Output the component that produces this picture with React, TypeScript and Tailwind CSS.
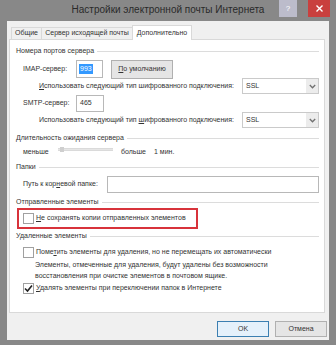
import React from "react";

const F = { fontFamily: '"Liberation Sans", Arial, sans-serif' };

function GroupHeader({ children, className = "" }: { children: React.ReactNode; className?: string }) {
  return (
    <div className={`flex items-center h-[12px] pl-[6px] pr-[5px] ${className}`}>
      <span className="whitespace-nowrap">{children}</span>
      <div className="flex-1 h-px bg-[#dcdcdc] ml-[3px]" />
    </div>
  );
}

function Select() {
  return (
    <div className="w-[77px] h-[16px] border border-[#cacaca] bg-white flex items-stretch shrink-0">
      <div className="flex-1 flex items-center pl-[3px]">SSL</div>
      <div className="w-[12px] bg-[#ececec] flex items-center justify-center">
        <svg width="7" height="5" viewBox="0 0 7 5">
          <path d="M0.8 1 L3.5 3.8 L6.2 1" fill="none" stroke="#707070" strokeWidth="1.3" />
        </svg>
      </div>
    </div>
  );
}

function Checkbox({ checked = false }: { checked?: boolean }) {
  return (
    <div className="w-[11px] h-[11px] border border-[#a0a0a0] bg-white flex items-center justify-center shrink-0">
      {checked && (
        <svg width="9" height="9" viewBox="0 0 9 9">
          <path d="M1 4.5 L3.5 7 L8 1.5" fill="none" stroke="#222" strokeWidth="1.6" />
        </svg>
      )}
    </div>
  );
}

export default function App() {
  return (
    <div className="w-[336px] h-[345px] bg-[#888888] flex flex-col text-[7px] text-[#333333] whitespace-nowrap" style={F}>
      {/* title bar */}
      <div className="relative h-[21px] flex items-center justify-center">
        <span className="text-[10px] text-[#2a2a2a] -mt-[2px]">Настройки электронной почты Интернета</span>
        <div className="absolute right-[39px] top-0 w-[18px] h-[17px] bg-[#bcbccb] flex items-center justify-center text-white text-[8px]">?</div>
        <div className="absolute right-[6px] top-0 w-[22px] h-[17px] bg-[#c9403e] flex items-center justify-center">
          <svg width="7" height="7" viewBox="0 0 7 7">
            <path d="M0.5 0.5 L6.5 6.5 M6.5 0.5 L0.5 6.5" stroke="#fff" strokeWidth="1.4" />
          </svg>
        </div>
      </div>

      {/* client */}
      <div className="mx-[7px] mb-[5px] flex-1 bg-[#f0f0f0] flex flex-col pt-[4px]">
        {/* tabs */}
        <div className="flex items-end pl-[4px] h-[14px] relative z-10">
          <div className="h-[12px] w-[31px] border border-[#d9d9d9] border-b-0 bg-[#f0f0f0] flex items-center justify-center">Общие</div>
          <div className="h-[12px] w-[92px] -ml-px border border-[#d9d9d9] border-b-0 bg-[#f0f0f0] flex items-center justify-center">Сервер исходящей почты</div>
          <div className="h-[15px] w-[60px] -ml-px -mb-px border border-[#d9d9d9] border-b-0 bg-white flex items-center justify-center">Дополнительно</div>
        </div>

        {/* panel */}
        <div className="ml-[2px] mr-[4px] h-[274px] border border-[#d9d9d9] bg-white flex flex-col">
          <GroupHeader className="mt-[5px]">Номера портов сервера</GroupHeader>

          <div className="mt-[3px] h-[18px] flex items-center pl-[13px]">
            <span className="w-[53px]">IMAP-сервер:</span>
            <div className="w-[27px] h-[18px] border border-[#b8b8b8] bg-white flex items-center pl-[2px]">
              <span className="bg-[#3399ff] text-white px-px">993</span>
            </div>
            <div className="ml-[8px] w-[62px] h-[19px] border border-[#b0b0b0] bg-[#e5e5e5] flex items-center justify-center">
              <span><u>П</u>о умолчанию</span>
            </div>
          </div>

          <div className="h-[16px] flex items-center justify-between pl-[29px] pr-[5px]">
            <span><u>И</u>спользовать следующий тип шифрованного подключения:</span>
            <Select />
          </div>

          <div className="h-[18px] flex items-center pl-[13px]">
            <span className="w-[53px]">SMTP-сервер:</span>
            <div className="w-[28px] h-[17px] border border-[#b8b8b8] bg-white flex items-center pl-[3px]">465</div>
          </div>

          <div className="h-[16px] flex items-center justify-between pl-[29px] pr-[5px]">
            <span>Использовать следующий тип <u>ш</u>ифрованного подключения:</span>
            <Select />
          </div>

          <GroupHeader className="mt-[4px]">Длительность ожидания сервера</GroupHeader>

          <div className="mt-[2px] h-[12px] flex items-center pl-[13px]">
            <span className="w-[22px]">меньше</span>
            <div className="ml-[13px] w-[55px] h-[3px] bg-[#e6e6e6] border-y border-[#dadada] relative -mt-[5px]">
              <div className="absolute left-[2px] -top-[2px] w-[4px] h-[5px] bg-[#cfcfcf]" />
            </div>
            <span className="ml-[8px] w-[26px]">больше</span>
            <span className="ml-[7px]">1 мин.</span>
          </div>

          <GroupHeader className="mt-[3px]">Папки</GroupHeader>

          <div className="mt-[3px] h-[17px] flex items-center pl-[13px] pr-[5px]">
            <span className="w-[84px]">Путь к кор<u>н</u>евой папке:</span>
            <div className="flex-1 h-[17px] border border-[#b8b8b8] bg-white" />
          </div>

          <GroupHeader className="mt-[3px]">Отправленные элементы</GroupHeader>

          <div className="ml-[7px] w-[181px] h-[21px] border-2 border-[#d8333b] flex items-center pl-[4px]">
            <Checkbox />
            <span className="ml-[2px]"><u>Н</u>е сохранять копии отправленных элементов</span>
          </div>

          <GroupHeader className="mt-[1px]">Удаленные элементы</GroupHeader>

          <div className="mt-[4px] h-[12px] flex items-center pl-[13px]">
            <Checkbox />
            <span className="ml-[2px]">Поме<u>т</u>ить элементы для удаления, но не перемещать их автоматически</span>
          </div>

          <div className="mt-[2px] h-[11px] flex items-center pl-[25px]">
            Элементы, отмеченные для удаления, будут удалены без возможности
          </div>
          <div className="h-[11px] flex items-center pl-[25px]">
            восстановления при очистке элементов в почтовом ящике.
          </div>

          <div className="h-[12px] flex items-center pl-[13px]">
            <Checkbox checked />
            <span className="ml-[2px]"><u>У</u>далять элементы при переключении папок в Интернете</span>
          </div>
        </div>

        {/* buttons */}
        <div className="mt-[8px] h-[16px] flex justify-end pr-[2px] gap-[6px]">
          <div className="w-[52px] h-[16px] border border-[#3c7fb1] bg-[#e5f1fb] flex items-center justify-center">OK</div>
          <div className="w-[52px] h-[16px] border border-[#b0b0b0] bg-[#e5e5e5] flex items-center justify-center">Отмена</div>
        </div>
      </div>
    </div>
  );
}
